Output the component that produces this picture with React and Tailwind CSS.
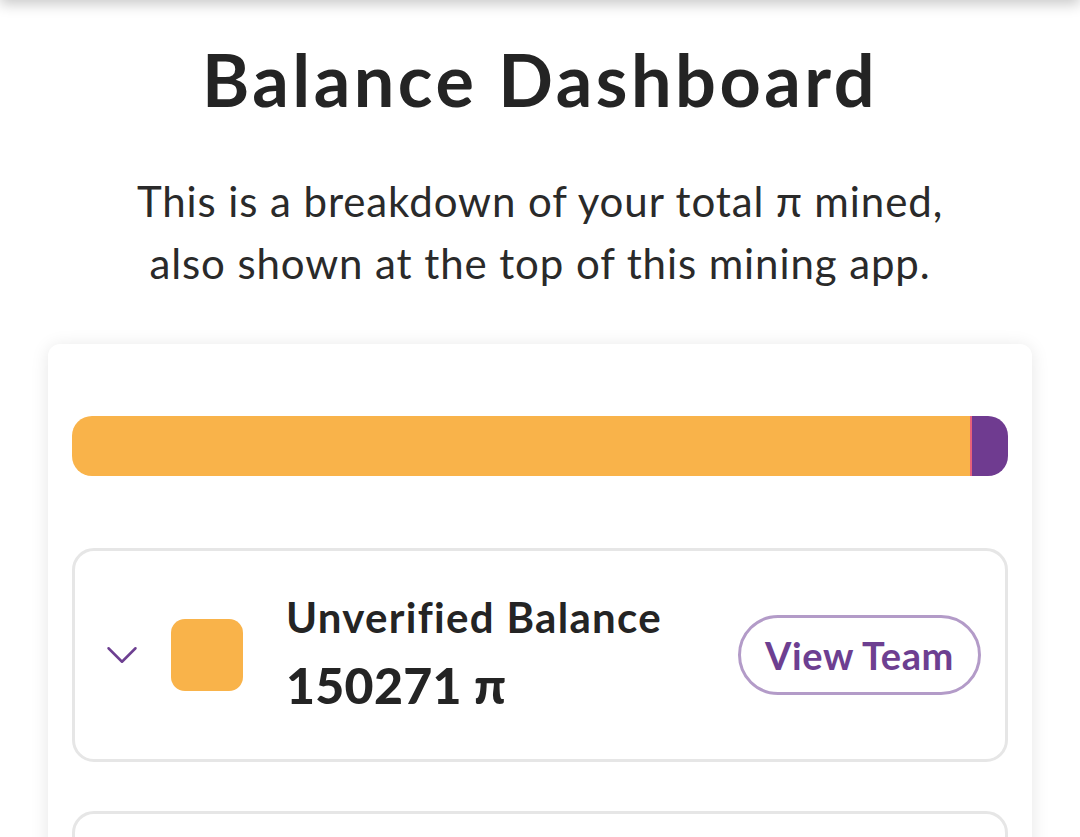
import { ChevronDown } from 'lucide-react';

const FONT = { fontFamily: 'Lato, "Open Sans", sans-serif' };

function BalanceRow({ color, label, amount, action }) {
  return (
    <div className="flex items-center h-[214px] rounded-[22px] border-[3px] border-[#e6e6e6] pl-[20px] pr-[24px]">
      <ChevronDown className="w-[54px] h-[54px] text-[#6d3f91]" strokeWidth={1.1} />
      <div className="ml-[22px] w-[72px] h-[72px] rounded-[14px]" style={{ background: color }} />
      <div className="ml-[43px] flex-1 flex flex-col gap-[16px]">
        <span className="text-[42px] leading-[44px] font-bold tracking-[1.3px] text-[#242424]">{label}</span>
        <span className="text-[50px] leading-[60px] font-black tracking-[0.3px] text-[#242424]">{amount}</span>
      </div>
      {action && (
        <button className="h-[80px] px-[24px] rounded-[40px] border-[3px] border-[#b39bc8] text-[38px] font-bold tracking-[0.6px] text-[#6d3f91]">
          {action}
        </button>
      )}
    </div>
  );
}

export default function App() {
  return (
    <div className="h-[837px] bg-white overflow-hidden relative" style={FONT}>
      <div className="absolute -top-[20px] left-0 right-0 h-[20px] shadow-[0_4px_14px_rgba(0,0,0,0.22)]" />
      <h1 className="pt-[33px] text-center text-[72px] leading-[92px] font-bold tracking-[3.5px] text-[#242424]">
        Balance Dashboard
      </h1>
      <p className="mt-[45px] text-center text-[42px] leading-[62px] tracking-[0.9px] text-[#2a2a2a]">
        This is a breakdown of your total π mined,
        <br />
        also shown at the top of this mining app.
      </p>
      <div className="mt-[50px] mx-[48px] bg-white rounded-[12px] shadow-[0_2px_18px_rgba(0,0,0,0.10)] px-[24px] pt-[72px] pb-[40px]">
        <div className="flex h-[60px] rounded-[20px] overflow-hidden">
          <div className="flex-1 bg-[#f9b34a]" />
          <div className="w-[2px] bg-[#e8607a]" />
          <div className="w-[36px] bg-[#6f3b90]" />
        </div>
        <div className="mt-[72px] flex flex-col gap-[49px]">
          <BalanceRow color="#f9b34a" label="Unverified Balance" amount="150271 π" action="View Team" />
          {/* next row starts at the bottom edge; only its outline is in view */}
          <div className="h-[214px] rounded-[22px] border-[3px] border-[#e6e6e6]" />
        </div>
      </div>
    </div>
  );
}
